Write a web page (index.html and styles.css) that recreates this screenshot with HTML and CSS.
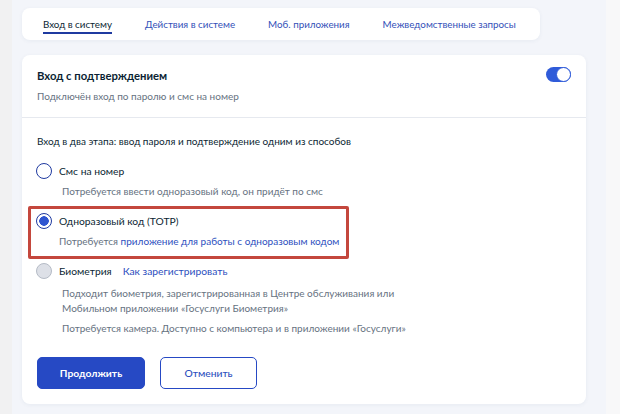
FILE: index.html
```html
<!DOCTYPE html>
<html lang="ru">
<head>
<meta charset="utf-8">
<link rel="stylesheet" href="styles.css">
</head>
<body>
<div class="page">
  <div class="strip-left"></div>
  <main class="main">
    <nav class="tabs">
      <a class="tab active">Вход в систему</a>
      <a class="tab">Действия в системе</a>
      <a class="tab">Моб. приложения</a>
      <a class="tab">Межведомственные запросы</a>
    </nav>
    <section class="card">
      <header class="card-head">
        <div class="head-text">
          <h2 class="title">Вход с подтверждением</h2>
          <p class="subtitle">Подключён вход по паролю и смс на номер</p>
        </div>
        <span class="toggle"><span class="knob"></span></span>
      </header>
      <div class="card-body">
        <p class="lead">Вход в два этапа: ввод пароля и подтверждение одним из способов</p>
        <div class="option first">
          <div class="opt-row"><span class="radio"></span><span class="opt-label">Смс на номер</span></div>
          <p class="hint">Потребуется ввести одноразовый код, он придёт по смс</p>
        </div>
        <div class="option highlighted">
          <div class="opt-row"><span class="radio checked"></span><span class="opt-label">Одноразовый код (TOTP)</span></div>
          <p class="hint">Потребуется <a class="link">приложение для работы с одноразовым кодом</a></p>
        </div>
        <div class="option last">
          <div class="opt-row"><span class="radio disabled"></span><span class="opt-label">Биометрия</span><a class="link reg">Как зарегистрировать</a></div>
          <p class="hint">Подходит биометрия, зарегистрированная в Центре обслуживания или<br>Мобильном приложении «Госуслуги Биометрия»</p>
          <p class="hint second">Потребуется камера. Доступно с компьютера и в приложении «Госуслуги»</p>
        </div>
        <div class="actions">
          <button class="btn primary">Продолжить</button>
          <button class="btn outline">Отменить</button>
        </div>
      </div>
    </section>
  </main>
  <div class="strip-right"></div>
</div>
</body>
</html>
```

FILE: styles.css
```css
* { box-sizing: border-box; }
html, body { margin: 0; padding: 0; }
body {
  font-family: Lato, "Noto Sans", sans-serif;
  color: #0b1f33;
  background: #f4f5f8;
}
.page {
  display: flex;
  width: 620px;
  height: 414px;
  overflow: hidden;
}
.strip-left { width: 12px; background: #f1f1f2; }
.strip-right { width: 14px; background: #f8f8f9; }
.main {
  flex: 1;
  background: #f3f5fa;
  padding: 8px 20px 0 10px;
  display: flex;
  flex-direction: column;
}
.tabs {
  width: 518px;
  height: 32px;
  flex: none;
  background: #fff;
  border-radius: 8px;
  box-shadow: 0 1px 4px rgba(40, 60, 110, 0.06);
  display: flex;
  align-items: stretch;
  padding-left: 21px;
  gap: 33px;
}
.tab {
  font-size: 9.8px;
  white-space: nowrap;
  color: #3350b8;
  display: flex;
  align-items: center;
  padding-bottom: 1px;
  position: relative;
}
.tab.active { color: #0b1f33; }
.tab.active::after {
  content: "";
  position: absolute;
  left: 0;
  right: 0;
  bottom: 6px;
  height: 2px;
  background: #1f3aa0;
}
.card {
  margin-top: 15px;
  width: 564px;
  height: 349px;
  flex: none;
  background: #fff;
  border-radius: 8px;
  box-shadow: 0 1px 4px rgba(40, 60, 110, 0.06);
}
.card-head {
  display: flex;
  justify-content: space-between;
  align-items: flex-start;
  padding: 13px 15px 0 15px;
  height: 63px;
  border-bottom: 1px solid #e6e9ef;
}
.title {
  margin: 0;
  font-size: 11.3px;
  font-weight: 700;
  line-height: 16px;
  color: #0b1f33;
}
.subtitle {
  margin: 5px 0 0;
  font-size: 10px;
  line-height: 14px;
  color: #66727f;
}
.toggle {
  width: 25px;
  height: 15px;
  border-radius: 8px;
  background: #2f5bd9;
  margin-top: -1px;
  position: relative;
  flex: none;
}
.knob {
  position: absolute;
  right: 0;
  top: 0;
  width: 15px;
  height: 15px;
  border-radius: 50%;
  background: #fff;
  border: 1.5px solid #2f5bd9;
}
.card-body {
  padding: 16px 15px 0 15px;
}
.lead {
  margin: 0;
  font-size: 10px;
  line-height: 14px;
  color: #0b1f33;
}
.option.first { margin-top: 15px; }
.option.highlighted {
  margin: 7px 0 0 -9px;
  padding: 4px 0 7px 6px;
  width: 321px;
  height: 53px;
  border: 3px solid #c4473d;
  border-radius: 2px;
}
.option.highlighted .hint { margin-left: 22px; }
.option.last { margin-top: 4px; }
.opt-row {
  display: flex;
  align-items: center;
  height: 16px;
}
.radio {
  width: 16px;
  height: 16px;
  border-radius: 50%;
  border: 1.5px solid #1f3aa0;
  background: #fff;
  flex: none;
  margin-right: 7px;
  margin-left: -1px;
}
.radio.checked {
  background: radial-gradient(circle, #2f55d0 0 4.5px, #fff 5px);
}
.radio.disabled {
  background: #dde0e7;
  border-color: #b5bbc6;
}
.opt-label {
  font-size: 10.3px;
  color: #0b1f33;
}
.link {
  color: #2d4fbe;
  text-decoration: none;
}
.reg {
  font-size: 10.3px;
  margin-left: 11px;
}
.hint {
  margin: 5px 0 0 25px;
  font-size: 10px;
  line-height: 15px;
  color: #66727f;
  white-space: nowrap;
}
.option.last .hint:first-of-type { margin-top: 7px; }
.hint.second { margin-top: 5px; }
.actions {
  display: flex;
  gap: 15px;
  margin-top: 21px;
}
.btn {
  height: 32px;
  border-radius: 5px;
  font-family: Lato, "Noto Sans", sans-serif;
  font-size: 10.3px;
  font-weight: 700;
  cursor: pointer;
}
.btn.primary {
  width: 108px;
  background: #2649c4;
  border: 1px solid #2649c4;
  color: #fff;
}
.btn.outline {
  width: 97px;
  background: #fff;
  border: 1.5px solid #2649c4;
  color: #2d4fbe;
  font-weight: 500;
}
```
